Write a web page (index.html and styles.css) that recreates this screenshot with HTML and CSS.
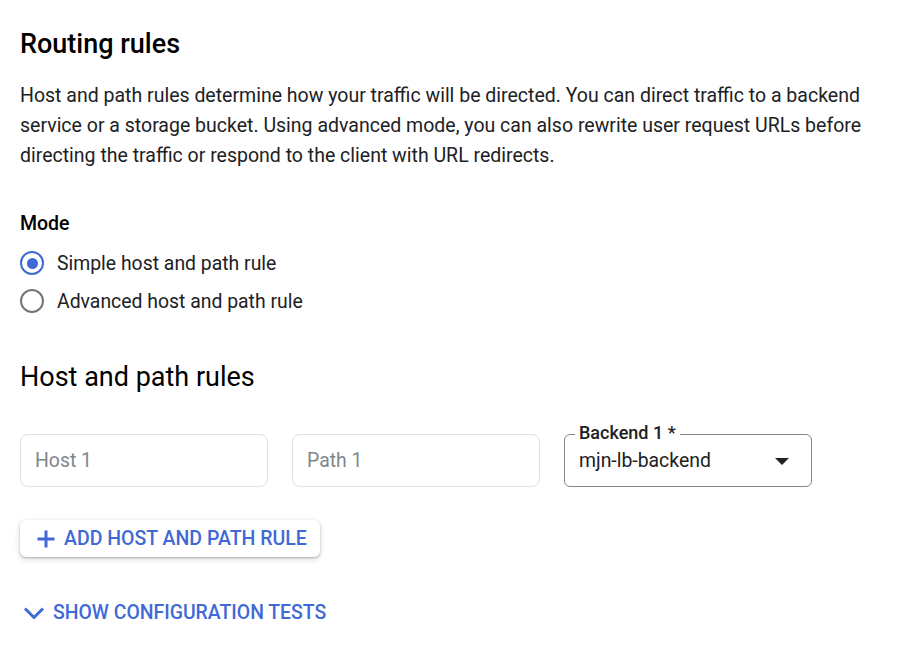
FILE: index.html
```html
<!DOCTYPE html>
<html>
<head>
<meta charset="utf-8">
<link rel="stylesheet" href="styles.css">
</head>
<body>
<div class="page">
  <h2 class="title">Routing rules</h2>
  <p class="desc">Host and path rules determine how your traffic will be directed. You can direct traffic to a backend service or a storage bucket. Using advanced mode, you can also rewrite user request URLs before directing the traffic or respond to the client with URL redirects.</p>

  <div class="mode">
    <div class="mode-label">Mode</div>
    <label class="radio-row first">
      <span class="radio checked"><span class="dot"></span></span>
      <span class="radio-text">Simple host and path rule</span>
    </label>
    <label class="radio-row">
      <span class="radio"></span>
      <span class="radio-text">Advanced host and path rule</span>
    </label>
  </div>

  <h2 class="subtitle">Host and path rules</h2>

  <div class="rule-row">
    <div class="field"><span class="placeholder">Host 1</span></div>
    <div class="field"><span class="placeholder">Path 1</span></div>
    <div class="field select">
      <span class="float-label">Backend 1 *</span>
      <span class="value">mjn-lb-backend</span>
      <svg class="caret" width="14" height="7" viewBox="0 0 14 7"><path d="M0 0h14L7 7z" fill="#202124"/></svg>
    </div>
  </div>

  <button class="add-btn">
    <svg width="20" height="20" viewBox="0 0 20 20"><path d="M10 1.5v17M1.5 10h17" fill="none" stroke="#4169d6" stroke-width="3"/></svg>
    <span>ADD HOST AND PATH RULE</span>
  </button>

  <div class="show-tests">
    <svg width="22" height="20" viewBox="0 0 22 20"><path d="M2 5.5l9 9 9-9" fill="none" stroke="#4169d6" stroke-width="3"/></svg>
    <span>SHOW CONFIGURATION TESTS</span>
  </div>
</div>
</body>
</html>
```

FILE: styles.css
```css
* { box-sizing: border-box; }
body {
  margin: 0;
  background: #fff;
  font-family: Roboto, "Noto Sans", Arial, sans-serif;
  color: #202124;
}
.page {
  padding: 28px 20px 0 20px;
}
.title {
  margin: 0;
  font-size: 27px;
  font-weight: 500;
  line-height: 32px;
  color: #000;
}
.desc {
  margin: 21px 0 0 0;
  font-size: 19.5px;
  line-height: 30px;
  color: #202124;
  max-width: 870px;
}
.mode {
  margin-top: 41px;
}
.mode-label {
  font-size: 19.5px;
  font-weight: 500;
  line-height: 24px;
  color: #000;
}
.radio-row {
  display: flex;
  align-items: center;
  gap: 13px;
  height: 38px;
  font-size: 19.4px;
  color: #202124;
}
.radio-row.first { margin-top: 8px; }
.radio {
  width: 24px;
  height: 24px;
  border: 2.5px solid #757575;
  border-radius: 50%;
  display: flex;
  align-items: center;
  justify-content: center;
  flex: none;
}
.radio.checked {
  border-color: #3f69d5;
}
.radio .dot {
  width: 11px;
  height: 11px;
  border-radius: 50%;
  background: #3f69d5;
}
.subtitle {
  margin: 41px 0 0 0;
  font-size: 27px;
  font-weight: 400;
  line-height: 32px;
  color: #000;
}
.rule-row {
  display: flex;
  gap: 24px;
  margin-top: 41px;
}
.field {
  position: relative;
  width: 248px;
  height: 53px;
  border: 1px solid #e0e0e0;
  border-radius: 8px;
  display: flex;
  align-items: center;
  padding: 0 14px;
  font-size: 19.4px;
}
.placeholder {
  color: #80868b;
}
.select {
  border-color: #80868b;
  border-radius: 6px;
  justify-content: space-between;
  padding: 0 22px 0 14px;
}
.value {
  color: #202124;
}
.float-label {
  position: absolute;
  top: -13px;
  left: 10px;
  padding: 0 4px;
  background: #fff;
  font-size: 18px;
  font-weight: 500;
  line-height: 22px;
  color: #202124;
}
.caret { display: block; margin-top: 1px; }
.add-btn {
  margin-top: 33px;
  display: flex;
  align-items: center;
  gap: 8px;
  height: 37px;
  padding: 0 13px 0 16px;
  border: none;
  border-radius: 6px;
  background: #fff;
  box-shadow: 0 1px 2px rgba(60,64,67,0.3), 0 2px 5px 1px rgba(60,64,67,0.15);
  font-family: Roboto, "Noto Sans", Arial, sans-serif;
  font-size: 19.5px;
  font-weight: 500;
  color: #4169d6;
}
.add-btn svg { display: block; }
.show-tests {
  margin-top: 44px;
  display: flex;
  align-items: center;
  gap: 8px;
  padding-left: 3px;
  font-size: 19.4px;
  font-weight: 500;
  color: #4169d6;
}
.show-tests svg { display: block; }
```
